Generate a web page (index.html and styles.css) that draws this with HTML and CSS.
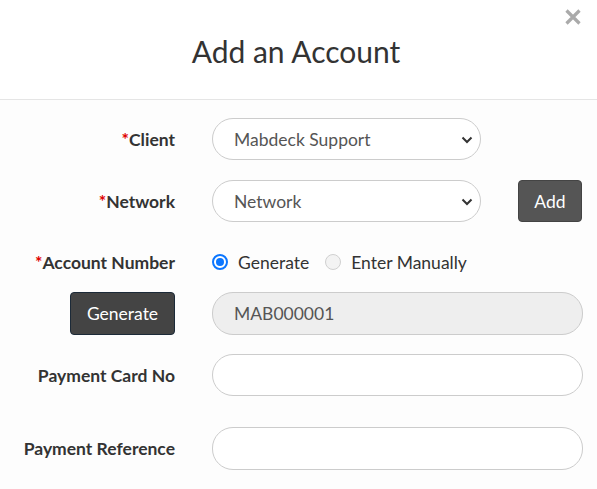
FILE: index.html
```html
<!DOCTYPE html>
<html>
<head>
<meta charset="utf-8">
<link rel="stylesheet" href="styles.css">
</head>
<body>
<div class="modal">
  <div class="modal-header">
    <h1 class="title">Add an Account</h1>
    <button class="close" aria-label="Close">
      <svg width="18" height="18" viewBox="0 0 18 18"><path d="M2.5 2.5 L15.5 15.5 M15.5 2.5 L2.5 15.5" stroke="#aaaaaa" stroke-width="3.2" stroke-linecap="butt" fill="none"/></svg>
    </button>
  </div>
  <div class="modal-body">
    <div class="row row-client">
      <label class="label"><span class="req">*</span>Client</label>
      <div class="control">
        <div class="select narrow"><span>Mabdeck Support</span><svg class="chev" width="12" height="8" viewBox="0 0 12 8"><path d="M1.5 1.5 L6 6 L10.5 1.5" stroke="#333" stroke-width="2" fill="none"/></svg></div>
      </div>
    </div>
    <div class="row row-network">
      <label class="label"><span class="req">*</span>Network</label>
      <div class="control split">
        <div class="select narrow"><span>Network</span><svg class="chev" width="12" height="8" viewBox="0 0 12 8"><path d="M1.5 1.5 L6 6 L10.5 1.5" stroke="#333" stroke-width="2" fill="none"/></svg></div>
        <button class="btn btn-add">Add</button>
      </div>
    </div>
    <div class="row row-radio">
      <label class="label"><span class="req">*</span>Account Number</label>
      <div class="control radios">
        <span class="radio checked"></span><span class="rlabel">Generate</span>
        <span class="radio"></span><span class="rlabel">Enter Manually</span>
      </div>
    </div>
    <div class="row row-gen">
      <div class="label"><button class="btn btn-gen">Generate</button></div>
      <div class="control">
        <div class="input readonly">MAB000001</div>
      </div>
    </div>
    <div class="row row-card">
      <label class="label">Payment Card No</label>
      <div class="control"><div class="input"></div></div>
    </div>
    <div class="row row-ref">
      <label class="label">Payment Reference</label>
      <div class="control"><div class="input"></div></div>
    </div>
  </div>
</div>
</body>
</html>
```
FILE: styles.css
```css
html, body {
  margin: 0;
  padding: 0;
  background: #ffffff;
}
body {
  font-family: Lato, "Open Sans", sans-serif;
  color: #333333;
  width: 597px;
  height: 489px;
  overflow: hidden;
}
.modal {
  background: #ffffff;
}
.modal-header {
  position: relative;
  height: 99px;
  border-bottom: 1px solid #e5e5e5;
  display: flex;
  align-items: center;
  justify-content: center;
  padding-right: 5px;
}
.title {
  margin: 0;
  font-weight: 400;
  font-size: 30px;
  color: #333333;
  padding-top: 2px;
}
.close {
  position: absolute;
  top: 8px;
  right: 15px;
  background: none;
  border: 0;
  padding: 0;
  width: 18px;
  height: 18px;
  line-height: 0;
}
.modal-body {
  padding: 18px 14px 20px 0;
  background: #fdfdfd;
}
.row {
  display: grid;
  grid-template-columns: 175px 1fr;
  column-gap: 37px;
  align-items: center;
}
.label {
  text-align: right;
  font-weight: 700;
  font-size: 17.5px;
  color: #333333;
  display: flex;
  justify-content: flex-end;
  align-items: center;
  white-space: nowrap;
}
.req {
  color: #e00000;
}
.row-network { margin-top: 20px; }
.row-radio { margin-top: 28px; height: 24px; }
.row-gen { margin-top: 18px; }
.row-card { margin-top: 19px; }
.row-ref { margin-top: 31px; }
.select, .input {
  box-sizing: border-box;
  height: 42px;
  border: 1px solid #cccccc;
  border-radius: 21px;
  background: #ffffff;
  display: flex;
  align-items: center;
  padding: 0 7px 0 21px;
  font-size: 17.5px;
  color: #555555;
}
.select {
  justify-content: space-between;
}
.narrow {
  width: 269px;
}
.split {
  display: flex;
  align-items: center;
  justify-content: space-between;
}
.chev {
  margin-top: 1px;
}
.input.readonly {
  background: #eeeeee;
  height: 43px;
}
.row-ref .input { height: 43px; }
.btn {
  font-family: Lato, "Open Sans", sans-serif;
  color: #ffffff;
  font-size: 17.5px;
  border-radius: 4px;
  cursor: pointer;
}
.btn-add {
  width: 64px;
  height: 42px;
  background: #555555;
  border: 1px solid #444444;
  margin-right: 1px;
}
.btn-gen {
  width: 105px;
  height: 43px;
  background: #444444;
  border: 1px solid #1c2a38;
  font-weight: 400;
}
.radios {
  display: flex;
  align-items: center;
  font-size: 17.5px;
  color: #333333;
}
.radio {
  box-sizing: border-box;
  width: 16px;
  height: 16px;
  border-radius: 50%;
  border: 1px solid #d0d0d0;
  background: #f3f3f3;
  margin-right: 10px;
}
.radio.checked {
  border: 2px solid #0b76ff;
  background: #ffffff;
  position: relative;
}
.radio.checked::after {
  content: "";
  position: absolute;
  left: 2px;
  top: 2px;
  width: 8px;
  height: 8px;
  border-radius: 50%;
  background: #0b76ff;
}
.rlabel {
  margin-right: 16px;
}
```
